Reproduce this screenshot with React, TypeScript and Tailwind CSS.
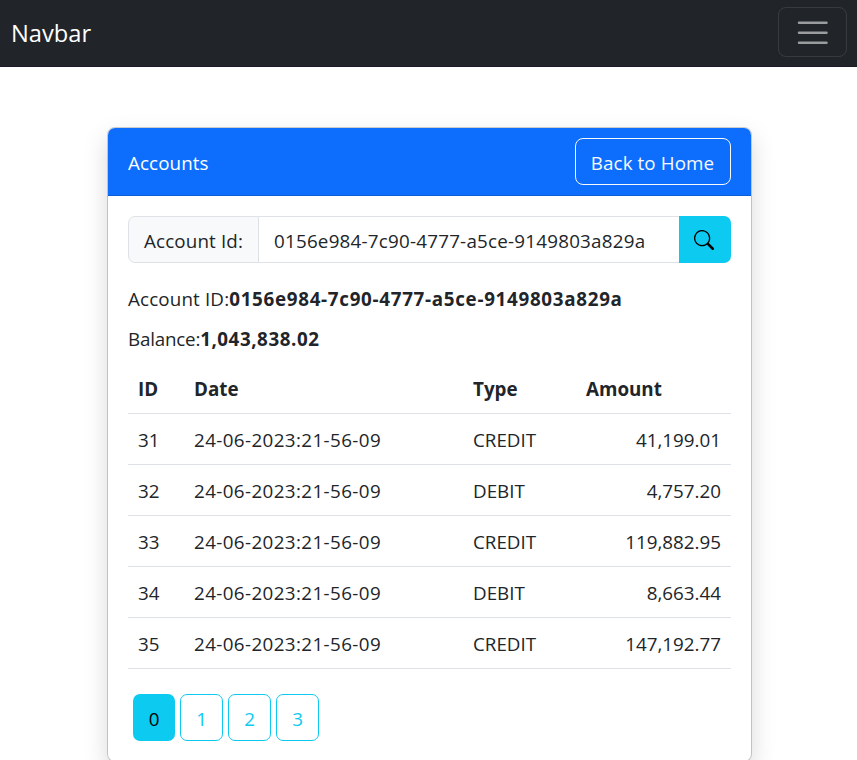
import React from "react";

type Transaction = { id: number; date: string; type: string; amount: string };

const transactions: Transaction[] = [
  { id: 31, date: "24-06-2023:21-56-09", type: "CREDIT", amount: "41,199.01" },
  { id: 32, date: "24-06-2023:21-56-09", type: "DEBIT", amount: "4,757.20" },
  { id: 33, date: "24-06-2023:21-56-09", type: "CREDIT", amount: "119,882.95" },
  { id: 34, date: "24-06-2023:21-56-09", type: "DEBIT", amount: "8,663.44" },
  { id: 35, date: "24-06-2023:21-56-09", type: "CREDIT", amount: "147,192.77" },
];

function Navbar() {
  return (
    <nav className="flex h-[67px] items-start justify-between border-b border-[#1c1a26] bg-[#212529] pt-[7px] pr-[10px] pl-[11px]">
      <span className="mt-[7px] text-[23.7px] leading-[38px] font-[370] text-white">Navbar</span>
      <button className="flex h-[50px] w-[69px] items-center justify-center rounded-[8px] border border-white/10 pt-px">
        <svg className="mr-[0.5px] size-[37.5px]" viewBox="0 0 30 30" fill="none">
          <path
            d="M4 7h22M4 15h22M4 23h22"
            stroke="rgba(255,255,255,0.55)"
            strokeWidth="2"
            strokeLinecap="round"
            strokeMiterlimit="10"
          />
        </svg>
      </button>
    </nav>
  );
}

function SearchBar() {
  return (
    <div className="flex h-[47px]">
      <span className="flex w-[131px] items-center rounded-l-[7px] border border-[#dee2e6] bg-[#f8f9fa] pt-[3px] pl-[15px] tracking-[0.15px] whitespace-nowrap">
        Account Id:
      </span>
      <span className="flex flex-1 items-center border-y border-[#dee2e6] pt-[3px] pl-[15px] tracking-[0.23px] whitespace-nowrap">
        0156e984-7c90-4777-a5ce-9149803a829a
      </span>
      <button className="flex w-[52px] items-center justify-center rounded-r-[7px] bg-[#0dcaf0] pr-[2px] pt-px text-black">
        <svg className="size-5" viewBox="0 0 16 16" fill="currentColor">
          <path d="M11.742 10.344a6.5 6.5 0 1 0-1.397 1.398h-.001c.03.04.062.078.098.115l3.85 3.85a1 1 0 0 0 1.415-1.414l-3.85-3.85a1.007 1.007 0 0 0-.115-.1zM12 6.5a5.5 5.5 0 1 1-11 0 5.5 5.5 0 0 1 11 0z" />
        </svg>
      </button>
    </div>
  );
}

function TransactionTable() {
  return (
    <table className="mt-[9px] w-full table-fixed border-collapse">
      <colgroup>
        <col className="w-[56px]" />
        <col className="w-[279px]" />
        <col className="w-[113px]" />
        <col className="w-[155px]" />
      </colgroup>
      <thead>
        <tr className="h-[50px] border-b border-[#dee2e6] text-left">
          <th className="px-[10px] pt-[2px]">ID</th>
          <th className="px-[10px] pt-[2px]">Date</th>
          <th className="px-[10px] pt-[2px]">Type</th>
          <th className="px-[10px] pt-[2px]">Amount</th>
        </tr>
      </thead>
      <tbody>
        {transactions.map((t) => (
          <tr key={t.id} className="h-[51px] border-b border-[#dee2e6]">
            <td className="px-[10px] pt-[2px]">{t.id}</td>
            <td className="px-[10px] pt-[2px] tracking-[0.4px]">{t.date}</td>
            <td className="px-[10px] pt-[2px]">{t.type}</td>
            <td className="px-[10px] pt-[2px] text-right">{t.amount}</td>
          </tr>
        ))}
      </tbody>
    </table>
  );
}

function Pagination() {
  return (
    <div className="mt-[25px] ml-[5px] flex gap-[5px]">
      <button className="h-[47px] w-[42px] rounded-[7px] bg-[#0dcaf0] pt-[3px] text-black">0</button>
      {[1, 2, 3].map((page) => (
        <button key={page} className="h-[47px] w-[43px] rounded-[7px] border border-[#0dcaf0] pt-[3px] text-[#0dcaf0]">
          {page}
        </button>
      ))}
    </div>
  );
}

export default function App() {
  return (
    <div className="h-[760px] overflow-hidden bg-white font-['Open_Sans',sans-serif] text-[18.8px] leading-[30px] font-[370] text-[#212529]">
      <Navbar />
      <main className="mt-[60px] ml-[107px] h-[635px] w-[645px] rounded-[8px] border border-black/[0.175] bg-white bg-clip-padding shadow-[0_10px_24px_rgba(0,0,0,0.15)]">
        <header className="flex h-[68px] items-center justify-between rounded-t-[7px] border-b border-[#0b5ed7] bg-[#0d6efd] px-5 text-white">
          <span className="pt-[2px] tracking-[0.1px]">Accounts</span>
          <button className="h-[47px] w-[156px] rounded-[8px] border border-[#f8f9fa] pt-[3px] pr-px tracking-[0.1px] whitespace-nowrap text-[#f8f9fa]">
            Back to Home
          </button>
        </header>
        <div className="pt-5 pr-5 pl-5">
          <SearchBar />
          <p className="mt-[21px]">
            <span className="tracking-[0.15px]">Account ID:</span>
            <b className="font-bold tracking-[0.7px]">0156e984-7c90-4777-a5ce-9149803a829a</b>
          </p>
          <p className="mt-[10px]">
            <span className="tracking-[-0.2px]">Balance:</span>
            <b className="font-bold tracking-[0.55px]">1,043,838.02</b>
          </p>
          <TransactionTable />
          <Pagination />
        </div>
      </main>
    </div>
  );
}
